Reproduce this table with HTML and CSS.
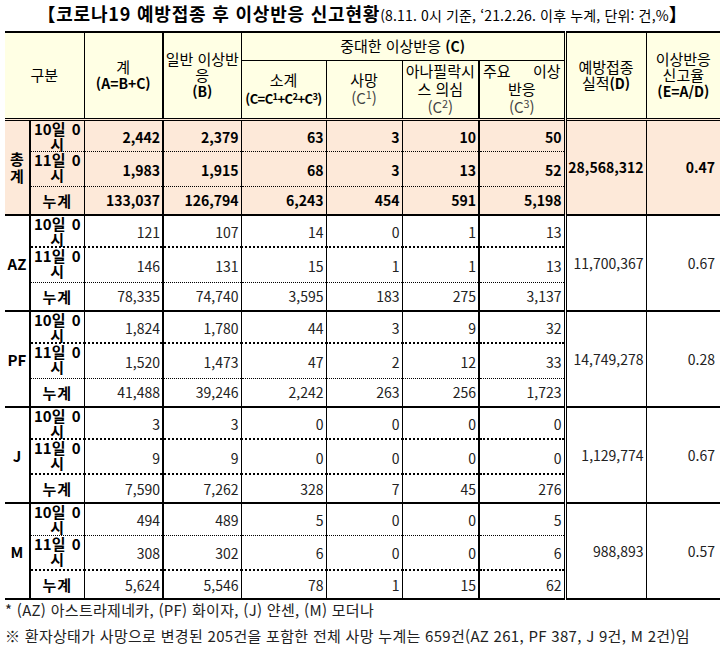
FILE: index.html
```html
<!DOCTYPE html>
<html lang="ko">
<head>
<meta charset="utf-8">
<title>코로나19 예방접종 후 이상반응 신고현황</title>
<link rel="stylesheet" href="styles.css">
</head>
<body>
<div class="page">
  <h1 class="title"><span class="big">【코로나19 예방접종 후 이상반응 신고현황</span><span class="small">(8.11. 0시 기준, ‘21.2.26. 이후 누계, 단위: 건,%</span><span class="big">】</span></h1>
  <table class="stats">
    <colgroup>
      <col class="w-grp"><col class="w-lbl"><col class="w-a"><col class="w-b"><col class="w-c"><col class="w-c1"><col class="w-c2"><col class="w-c3"><col class="w-d"><col class="w-e">
    </colgroup>
    <thead>
      <tr class="h1">
        <th colspan="2" rowspan="2" class="v1">구분</th>
        <th rowspan="2" class="v2">계<br><b>(A=B+C)</b></th>
        <th rowspan="2" class="v1">일반 이상반<br>응<br><b>(B)</b></th>
        <th colspan="4" class="vd">중대한 이상반응 <b>(C)</b></th>
        <th rowspan="2" class="v1">예방접종<br>실적<b>(D)</b></th>
        <th rowspan="2">이상반응<br>신고율<br><b>(E=A/D)</b></th>
      </tr>
      <tr class="h2">
        <th class="v1"><span class="sub1">소계</span><br><b class="ctot">(C=C<sup>1</sup>+C<sup>2</sup>+C<sup>3</sup>)</b></th>
        <th class="v1">사망<br><span class="cs">(C<sup>1</sup>)</span></th>
        <th class="v2">아나필락시<br>스 의심<br><span class="cs">(C<sup>2</sup>)</span></th>
        <th class="vd"><span class="spread"><span>주요</span><span>이상</span></span>반응<br><span class="cs">(C<sup>3</sup>)</span></th>
      </tr>
    </thead>
    <tbody class="total">
      <tr class="r1 thin">
        <td rowspan="3" class="grp">총<br>계</td>
        <td class="lbl"><div class="spread"><span>10일</span><span>0</span></div><div>시</div></td>
        <td class="n v2">2,442</td><td class="n v1">2,379</td><td class="n v1">63</td><td class="n v1">3</td><td class="n v2">10</td><td class="n vd">50</td>
        <td rowspan="3" class="n d v1">28,568,312</td><td rowspan="3" class="n e">0.47</td>
      </tr>
      <tr class="r2 thin">
        <td class="lbl"><div class="spread"><span>11일</span><span>0</span></div><div>시</div></td>
        <td class="n v2">1,983</td><td class="n v1">1,915</td><td class="n v1">68</td><td class="n v1">3</td><td class="n v2">13</td><td class="n vd">52</td>
      </tr>
      <tr class="r3">
        <td class="lbl sum">누계</td>
        <td class="n v2">133,037</td><td class="n v1">126,794</td><td class="n v1">6,243</td><td class="n v1">454</td><td class="n v2">591</td><td class="n vd">5,198</td>
      </tr>
    </tbody>
    <tbody>
      <tr class="r1 thick">
        <td rowspan="3" class="grp">AZ</td>
        <td class="lbl"><div class="spread"><span>10일</span><span>0</span></div><div>시</div></td>
        <td class="n v2">121</td><td class="n v1">107</td><td class="n v1">14</td><td class="n v1">0</td><td class="n v2">1</td><td class="n vd">13</td>
        <td rowspan="3" class="n d v1">11,700,367</td><td rowspan="3" class="n e">0.67</td>
      </tr>
      <tr class="r2 thin">
        <td class="lbl"><div class="spread"><span>11일</span><span>0</span></div><div>시</div></td>
        <td class="n v2">146</td><td class="n v1">131</td><td class="n v1">15</td><td class="n v1">1</td><td class="n v2">1</td><td class="n vd">13</td>
      </tr>
      <tr class="r3">
        <td class="lbl sum">누계</td>
        <td class="n v2">78,335</td><td class="n v1">74,740</td><td class="n v1">3,595</td><td class="n v1">183</td><td class="n v2">275</td><td class="n vd">3,137</td>
      </tr>
    </tbody>
    <tbody>
      <tr class="r1 thick">
        <td rowspan="3" class="grp">PF</td>
        <td class="lbl"><div class="spread"><span>10일</span><span>0</span></div><div>시</div></td>
        <td class="n v2">1,824</td><td class="n v1">1,780</td><td class="n v1">44</td><td class="n v1">3</td><td class="n v2">9</td><td class="n vd">32</td>
        <td rowspan="3" class="n d v1">14,749,278</td><td rowspan="3" class="n e">0.28</td>
      </tr>
      <tr class="r2 thin">
        <td class="lbl"><div class="spread"><span>11일</span><span>0</span></div><div>시</div></td>
        <td class="n v2">1,520</td><td class="n v1">1,473</td><td class="n v1">47</td><td class="n v1">2</td><td class="n v2">12</td><td class="n vd">33</td>
      </tr>
      <tr class="r3">
        <td class="lbl sum">누계</td>
        <td class="n v2">41,488</td><td class="n v1">39,246</td><td class="n v1">2,242</td><td class="n v1">263</td><td class="n v2">256</td><td class="n vd">1,723</td>
      </tr>
    </tbody>
    <tbody>
      <tr class="r1 thick">
        <td rowspan="3" class="grp">J</td>
        <td class="lbl"><div class="spread"><span>10일</span><span>0</span></div><div>시</div></td>
        <td class="n v2">3</td><td class="n v1">3</td><td class="n v1">0</td><td class="n v1">0</td><td class="n v2">0</td><td class="n vd">0</td>
        <td rowspan="3" class="n d v1">1,129,774</td><td rowspan="3" class="n e">0.67</td>
      </tr>
      <tr class="r2 thick">
        <td class="lbl"><div class="spread"><span>11일</span><span>0</span></div><div>시</div></td>
        <td class="n v2">9</td><td class="n v1">9</td><td class="n v1">0</td><td class="n v1">0</td><td class="n v2">0</td><td class="n vd">0</td>
      </tr>
      <tr class="r3">
        <td class="lbl sum">누계</td>
        <td class="n v2">7,590</td><td class="n v1">7,262</td><td class="n v1">328</td><td class="n v1">7</td><td class="n v2">45</td><td class="n vd">276</td>
      </tr>
    </tbody>
    <tbody>
      <tr class="r1 thin">
        <td rowspan="3" class="grp">M</td>
        <td class="lbl"><div class="spread"><span>10일</span><span>0</span></div><div>시</div></td>
        <td class="n v2">494</td><td class="n v1">489</td><td class="n v1">5</td><td class="n v1">0</td><td class="n v2">0</td><td class="n vd">5</td>
        <td rowspan="3" class="n d v1">988,893</td><td rowspan="3" class="n e">0.57</td>
      </tr>
      <tr class="r2 thick">
        <td class="lbl"><div class="spread"><span>11일</span><span>0</span></div><div>시</div></td>
        <td class="n v2">308</td><td class="n v1">302</td><td class="n v1">6</td><td class="n v1">0</td><td class="n v2">0</td><td class="n vd">6</td>
      </tr>
      <tr class="r3">
        <td class="lbl sum">누계</td>
        <td class="n v2">5,624</td><td class="n v1">5,546</td><td class="n v1">78</td><td class="n v1">1</td><td class="n v2">15</td><td class="n vd">62</td>
      </tr>
    </tbody>
  </table>
  <div class="notes">
    <p>* (AZ) 아스트라제네카, (PF) 화이자, (J) 얀센, (M) 모더나</p>
    <p>※ 환자상태가 사망으로 변경된 205건을 포함한 전체 사망 누계는 659건(AZ 261, PF 387, J 9건, M 2건)임</p>
  </div>
</div>
</body>
</html>
```

FILE: styles.css
```css
* { box-sizing: border-box; }
html, body { margin: 0; padding: 0; background: #fff; }
body {
  font-family: "Noto Sans CJK KR", "Noto Sans", sans-serif;
  color: #000;
}
.page { width: 724px; padding: 0 4px 0 5px; }

.title {
  margin: 0;
  height: 31px;
  display: flex;
  justify-content: center;
  align-items: baseline;
  line-height: 27px;
  font-weight: 700;
  white-space: nowrap;
}
.title .big { font-size: 18px; letter-spacing: 0.8px; }
.title .small { font-size: 14px; font-weight: 400; letter-spacing: 0.15px; }

.stats {
  width: 715px;
  border-collapse: collapse;
  table-layout: fixed;
  border-top: 2px solid #000;
  border-bottom: 2px solid #000;
}
.w-grp { width: 25px; }
.w-lbl { width: 54px; }
.w-a { width: 79px; }
.w-b { width: 78px; }
.w-c { width: 85px; }
.w-c1 { width: 76px; }
.w-c2 { width: 77px; }
.w-c3 { width: 86px; }
.w-d { width: 81px; }
.w-e { width: 74px; }

thead { background: #ffffe4; border-bottom: 3px double #000; }
th {
  font-weight: 400;
  font-size: 15px;
  line-height: 16px;
  padding: 0 1px;
  text-align: center;
  vertical-align: middle;
}
th b { font-weight: 700; font-size: 14px; }
.h1 { height: 28px; }
.h1 th[colspan="4"] { border-bottom: 1px solid #000; }
.h2 { height: 59px; }
.h2 th { line-height: 18px; }
.ctot { font-size: 13px; letter-spacing: -0.6px; white-space: nowrap; display: inline-block; margin: 0 -4px; }
.cs { color: #444; font-size: 15px; }
sup { font-size: 0.72em; line-height: 0; vertical-align: 0.45em; }
th .spread { display: flex; justify-content: space-between; padding: 0 2px; }

.v1 { border-right: 1px solid #000; }
.v2 { border-right: 2px solid #000; }
.vd { border-right: 3px double #000; }

tbody { border-top: 2px solid #000; }
tbody.total { background: #fde9d9; border-top: 3px double #000; }
tbody.total td { font-weight: 700; color: #000; }

.r1 { height: 32px; }
.r2 { height: 35px; }
.r3 { height: 29px; }
.thin { border-bottom: 1px dotted #000; }
.thick { border-bottom: 2px dotted #000; }

td {
  font-size: 14px;
  line-height: 17px;
  color: #222;
  padding: 0;
  vertical-align: middle;
}
td.n { text-align: right; padding: 3px 2px 0 0; }
tr.r3 td.n { padding-top: 1px; }
td.d { padding-right: 2px; padding-top: 0; }
td.e { padding-right: 5px; padding-top: 0; }

td.grp {
  border-right: 2px solid #000;
  text-align: center;
  font-weight: 700;
  font-size: 15px;
  line-height: 17px;
  color: #000;
}
td.lbl {
  border-right: 1px solid #000;
  font-weight: 700;
  font-size: 15px;
  line-height: 15px;
  color: #000;
  text-align: center;
  vertical-align: top;
  padding: 0 3px;
}
td.lbl .spread { display: flex; justify-content: space-between; }
td.lbl.sum { vertical-align: middle; letter-spacing: 1px; }

.notes { margin-top: -3px; }
.notes p {
  margin: 0;
  font-size: 15px;
  line-height: 26px;
  color: #222;
  white-space: nowrap;
  letter-spacing: 0.3px;
}
```
